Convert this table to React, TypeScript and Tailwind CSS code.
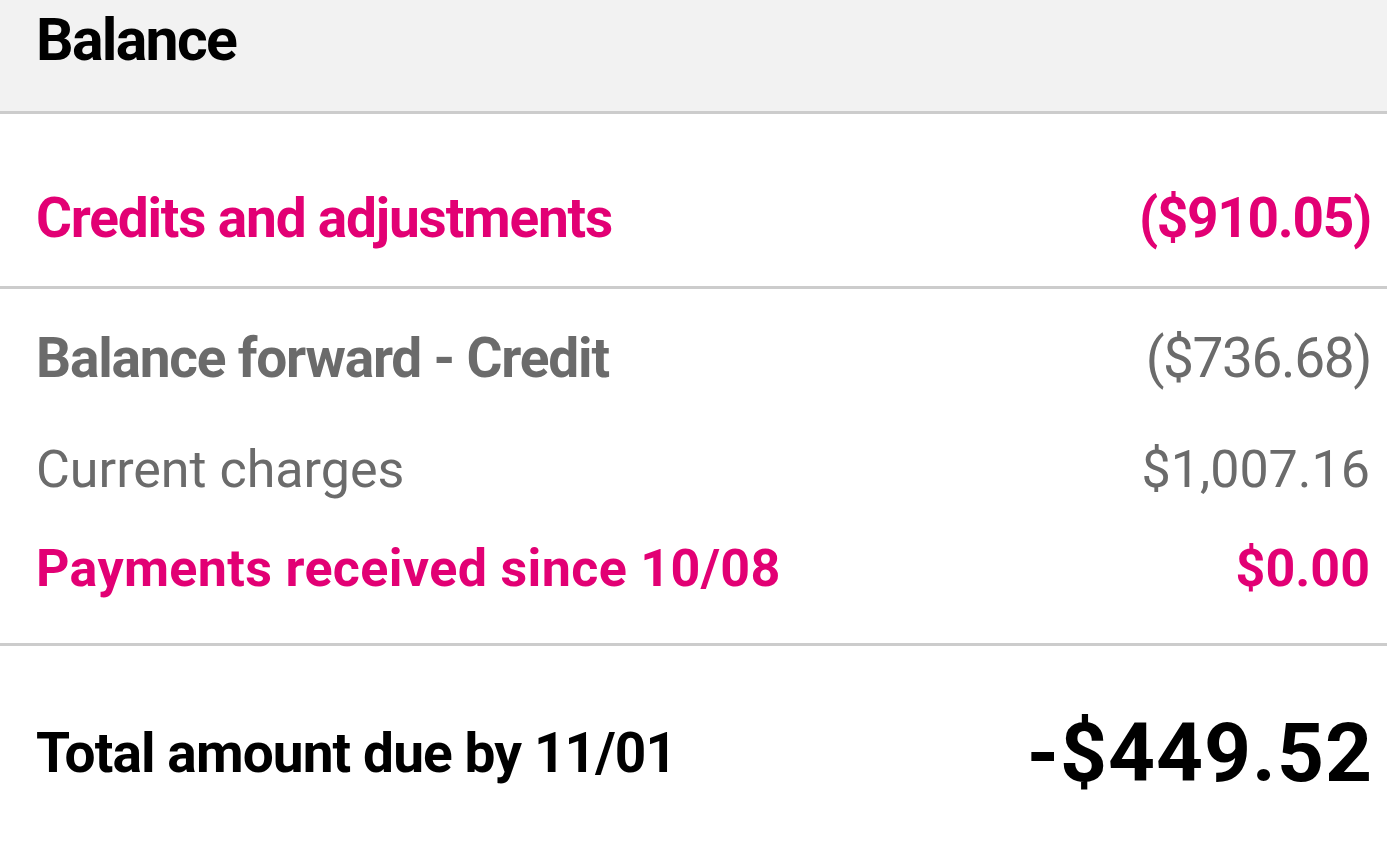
type Line = {
  label: string;
  amount: string;
  labelClass: string;
  amountClass: string;
  gap: string;
};

const lines: Line[] = [
  {
    label: 'Balance forward - Credit',
    amount: '($736.68)',
    labelClass: 'text-[55px] font-bold text-[#6b6b6b] tracking-[-1.2px]',
    amountClass: 'text-[55px] font-normal text-[#6b6b6b] tracking-[-1.4px] -mr-[1px]',
    gap: 'pt-[42px]',
  },
  {
    label: 'Current charges',
    amount: '$1,007.16',
    labelClass: 'text-[52px] font-normal text-[#6b6b6b]',
    amountClass: 'text-[52px] font-normal text-[#6b6b6b]',
    gap: 'pt-[58px]',
  },
  {
    label: 'Payments received since 10/08',
    amount: '$0.00',
    labelClass: 'text-[52px] font-bold text-[#e20074] tracking-[0.35px]',
    amountClass: 'text-[52px] font-bold text-[#e20074]',
    gap: 'pt-[47px]',
  },
];

export default function App() {
  return (
    <div className="min-h-screen w-full bg-white font-['Roboto',sans-serif] leading-none">
      <header className="h-[114px] border-b-[3px] border-[#cccccc] bg-[#f2f2f2] pl-[36px] pt-[10px]">
        <h1 className="text-[59px] font-bold tracking-[-1.7px] text-black">Balance</h1>
      </header>

      <section className="border-b-[3px] border-[#cccccc] pl-[36px] pr-[17px] pt-[77px] pb-[40px]">
        <div className="flex justify-between text-[55px] font-bold text-[#e20074]">
          <span className="tracking-[-1.2px]">Credits and adjustments</span>
          <span className="-mr-[1px] tracking-[-1.3px]">($910.05)</span>
        </div>
      </section>

      <section className="border-b-[3px] border-[#cccccc] pl-[36px] pr-[17px] pb-[48px]">
        {lines.map(line => (
          <div key={line.label} className={`flex justify-between ${line.gap}`}>
            <span className={line.labelClass}>{line.label}</span>
            <span className={line.amountClass}>{line.amount}</span>
          </div>
        ))}
      </section>

      <section className="flex items-center justify-between pl-[36px] pr-[17px] pt-[66px]">
        <span className="text-[55px] font-bold tracking-[-0.9px] text-black">
          Total amount due by 11/01
        </span>
        <span className="-mr-[3px] text-[82px] font-bold tracking-[1px] text-black">-$449.52</span>
      </section>
    </div>
  );
}
